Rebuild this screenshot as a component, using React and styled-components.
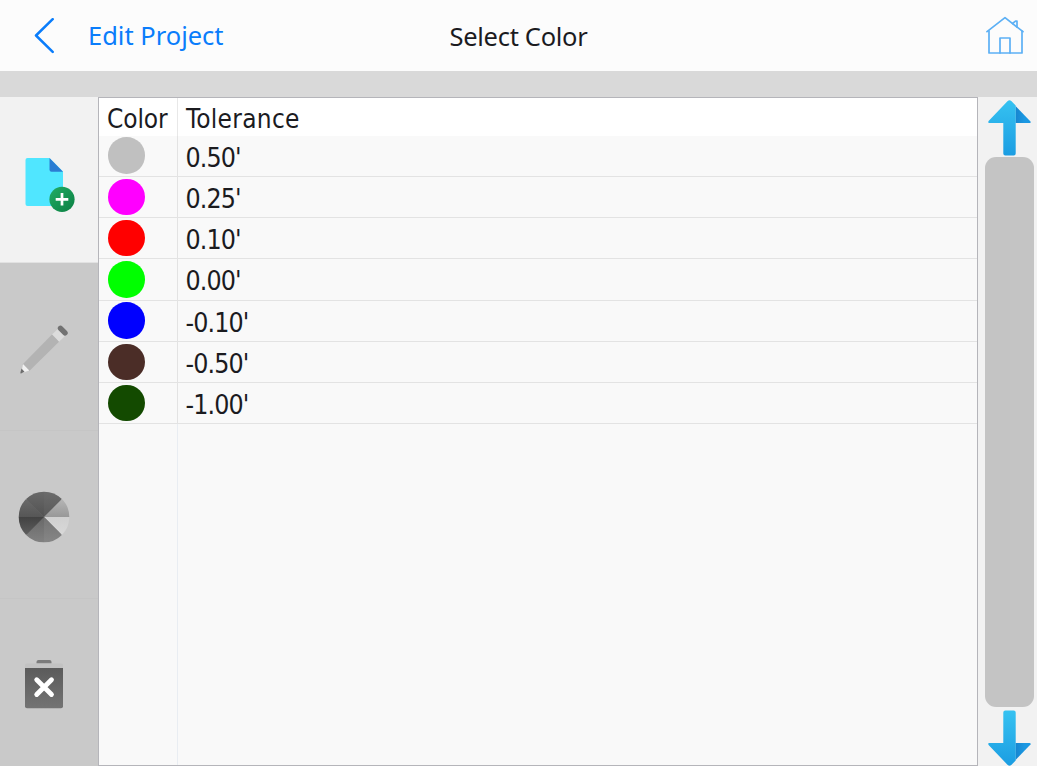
import React, { useState } from 'react';
import styled, { createGlobalStyle } from 'styled-components';

const GlobalStyle = createGlobalStyle`
  * {
    box-sizing: border-box;
  }

  body {
    margin: 0;
    overflow: hidden;
    font-family: 'Noto Sans', 'Open Sans', sans-serif;
    color: #1b1b1f;
  }

  svg {
    display: block;
  }
`;

const Screen = styled.div`
  display: flex;
  flex-direction: column;
  width: 100%;
  height: 100vh;
  background-color: #f2f2f2;
`;

const Header = styled.header`
  display: grid;
  grid-template-columns: 1fr auto 1fr;
  align-items: center;
  height: 71px;
  padding: 0 12px 0 33px;
  background-color: #fcfcfc;
`;

const BackButton = styled.button`
  display: flex;
  align-items: center;
  gap: 32px;
  height: 71px;
  padding: 0;
  border: none;
  background: none;
  color: #0a7dfb;
  font-family: inherit;
  font-size: 25.5px;
  line-height: 71px;
  letter-spacing: 0;
  cursor: pointer;
`;

const Title = styled.h1`
  margin: 0 21px 0 0;
  padding: 1px 0 0;
  font-size: 25.5px;
  font-weight: 400;
  line-height: 67px;
  letter-spacing: -0.3px;
  white-space: nowrap;
`;

const HomeButton = styled.button`
  justify-self: end;
  padding: 0;
  border: none;
  background: none;
  cursor: pointer;
`;

const Divider = styled.div`
  height: 26px;
  flex-shrink: 0;
  background-color: #d9d9d9;
`;

const Body = styled.main`
  display: flex;
  flex: 1;
  min-height: 0;
`;

const Sidebar = styled.nav`
  display: flex;
  flex-direction: column;
  width: 98px;
`;

const SideButton = styled.button`
  display: flex;
  flex-shrink: 0;
  align-items: center;
  justify-content: center;
  height: 168px;
  padding: ${props => props.$pad || '0 10px 0 0'};
  border: none;
  border-bottom: 1px solid ${props => (props.$active ? '#e2e2e2' : '#c5c5c5')};
  background-color: ${props => (props.$active ? '#f2f2f2' : '#c9c9c9')};
  cursor: pointer;

  &:first-child {
    height: 166px;
  }

  &:last-child {
    border-bottom: none;
  }
`;

const Table = styled.section`
  display: flex;
  flex-direction: column;
  flex: 1;
  border: 1px solid #b5b5ba;
  background-color: #f9f9f9;
`;

const TableHead = styled.div`
  display: grid;
  grid-template-columns: 79px 1fr;
  height: 37.5px;
  background-color: #ffffff;
`;

const HeadCell = styled.div`
  padding-left: 8px;
  border-right: ${props => (props.$first ? '1px solid #e8e8e8' : 'none')};
  font-family: 'DejaVu Sans Condensed', 'DejaVu Sans', sans-serif;
  font-stretch: condensed;
  font-size: 26px;
  line-height: 43px;
  letter-spacing: ${props => (props.$first ? -0.1 : 0.3)}px;
`;

const Row = styled.div`
  display: grid;
  grid-template-columns: 79px 1fr;
  height: 41.25px;
  border-bottom: 1px solid #e3e3e3;
`;

const SwatchCell = styled.div`
  display: flex;
  align-items: center;
  padding-left: 9px;
  border-right: 1px solid #e3e3e3;
`;

const Swatch = styled.span`
  width: 36.5px;
  height: 36.5px;
  border-radius: 50%;
  background-color: ${props => props.$color};
`;

const ValueCell = styled.div`
  height: 40px;
  padding-left: 7.5px;
  font-family: 'DejaVu Sans Condensed', 'DejaVu Sans', sans-serif;
  font-stretch: condensed;
  font-size: 26.5px;
  line-height: 43.5px;
  letter-spacing: -0.9px;
`;

const EmptyArea = styled.div`
  flex: 1;
  width: 79px;
  border-right: 1px solid #e9edf2;
`;

const ScrollColumn = styled.aside`
  display: flex;
  flex-direction: column;
  align-items: center;
  width: 59px;
  padding: 3px 0 0 3px;
`;

const ScrollThumb = styled.div`
  width: 49px;
  height: 551px;
  margin: 0.5px 0 3px;
  border-radius: 11px;
  background-color: #c4c4c4;
`;

const ArrowIcon = styled.svg`
  flex-shrink: 0;
  margin-left: 1px;
  transform: ${props => (props.$down ? 'scaleY(-1)' : 'none')};
`;

const tolerances = [
  { color: '#c0c0c0', value: "0.50'" },
  { color: '#ff00ff', value: "0.25'" },
  { color: '#ff0000', value: "0.10'" },
  { color: '#00ff00', value: "0.00'" },
  { color: '#0000ff', value: "-0.10'" },
  { color: '#4b2d27', value: "-0.50'" },
  { color: '#134a00', value: "-1.00'" }
];

const BackIcon = () => (
  <svg width="23" height="36" viewBox="0 0 23 36" fill="none" stroke="#0a7dfb" strokeWidth="2.5" strokeLinecap="round" strokeLinejoin="round">
    <path d="M19.700 1.200 3 17.500l16.700 16.400" />
  </svg>
);

const HomeIcon = () => (
  <svg width="40" height="40" viewBox="0 0 40 40" fill="none" stroke="#5cb0f5" strokeWidth="1.7" strokeLinejoin="round" strokeLinecap="round">
    <path d="M2 15.700 20 1.700l18 14" />
    <path d="M4 15v22h33V15" />
    <path d="M15 37V22h10v15" />
    <path d="M27.500 7.500 30.500 5.200h1.500v5.800" />
  </svg>
);

const AddFileIcon = () => (
  <svg width="50" height="56" viewBox="0 0 50 56">
    <defs>
      <linearGradient id="badge" x1="0" y1="0" x2="1" y2="1">
        <stop offset="0" stopColor="#21ad64" />
        <stop offset="1" stopColor="#0c7f43" />
      </linearGradient>
    </defs>
    <path d="M2.500 1H24.500L38 14.500V49H2.500A2 2 0 0 1 .5 47V3A2 2 0 0 1 2.500 1Z" fill="#50e6ff" />
    <path d="M24.500 1 38 14.700H26.500A2 2 0 0 1 24.500 12.700Z" fill="#2b7cd3" />
    <circle cx="37" cy="42.300" r="12.600" fill="url(#badge)" />
    <path d="M37 36v12.600M30.700 42.300h12.600" stroke="#fff" strokeWidth="2.700" />
  </svg>
);

const PencilIcon = () => (
  <svg width="50" height="50" viewBox="0 0 50 50">
    <path d="M33 9.500 38.800 4 46 11 40 16.800Z" fill="#dcdcdc" />
    <path d="M3.500 39.500 33 9.500 40 16.800 10.300 46Z" fill="#b3b3b3" />
    <path d="M4 39 10.300 45.500 2.500 48Z" fill="#f1f1f1" />
    <path d="M2.500 43.500 5.500 46.800 2 48.500Q1 48.500 1.500 47Z" fill="#6e6e6e" />
    <path d="M41.500 3.300 46 7.900" stroke="#727272" strokeWidth="5.400" strokeLinecap="round" />
  </svg>
);

const wheelSlices = [
  { path: 'M26 26V.7A25.300 25.300 0 0 1 43.900 8.100Z', from: '#6b6b6b', to: '#595959' },
  { path: 'M26 26 43.900 8.100A25.300 25.300 0 0 1 51.300 26Z', from: '#b5b5b5', to: '#989898' },
  { path: 'M26 26H51.300A25.300 25.300 0 0 1 43.900 43.900Z', from: '#d0d0d0', to: '#d9d9d9' },
  { path: 'M26 26 43.900 43.900A25.300 25.300 0 0 1 26 51.300Z', from: '#737373', to: '#868686' },
  { path: 'M26 26V51.300A25.300 25.300 0 0 1 8.100 43.900Z', from: '#686868', to: '#818181' },
  { path: 'M26 26 8.100 43.900A25.300 25.300 0 0 1 .7 26Z', from: '#424242', to: '#5d5d5d' },
  { path: 'M26 26H.7A25.300 25.300 0 0 1 8.100 8.100Z', from: '#6a6a6a', to: '#565656' },
  { path: 'M26 26 8.100 8.100A25.300 25.300 0 0 1 26 .7Z', from: '#696969', to: '#525252' }
];

const ColorWheelIcon = () => (
  <svg width="52" height="52" viewBox="0 0 52 52">
    <defs>
      {wheelSlices.map((slice, i) => (
        <linearGradient key={i} id={`slice-${i}`} x1="0" y1="0" x2="0" y2="1">
          <stop offset="0" stopColor={slice.from} />
          <stop offset="1" stopColor={slice.to} />
        </linearGradient>
      ))}
    </defs>
    <circle cx="26" cy="26" r="24.500" fill="#6e6e6e" />
    {wheelSlices.map((slice, i) => (
      <path key={i} d={slice.path} fill={`url(#slice-${i})`} />
    ))}
  </svg>
);

const TrashIcon = () => (
  <svg width="40" height="50" viewBox="0 0 40 50">
    <defs>
      <linearGradient id="bin" x1="0" y1="0" x2="0" y2="1">
        <stop offset="0" stopColor="#5b5b5b" />
        <stop offset="1" stopColor="#737373" />
      </linearGradient>
    </defs>
    <path d="M12.500 3.500V2a2 2 0 0 1 2-2h11a2 2 0 0 1 2 2V3.500Z" fill="#7b7b7b" />
    <path d="M1 9V5A1.500 1.500 0 0 1 2.500 3.500h35A1.500 1.500 0 0 1 39 5V9Z" fill="#c2c2c2" />
    <path d="M1 8H39V46.200A2 2 0 0 1 37 48.200H3A2 2 0 0 1 1 46.200Z" fill="url(#bin)" />
    <path d="M12.700 19.700 27.500 34.500M27.500 19.700 12.700 34.500" stroke="#fff" strokeWidth="4.800" strokeLinecap="round" />
  </svg>
);

const ScrollArrow = ({ down }) => {
  const id = down ? 'arrow-down' : 'arrow-up';

  return (
    <ArrowIcon $down={down} width="43" height="56" viewBox="0 0 43 56">
      <defs>
        <linearGradient id={id} x1="0" y1={down ? 1 : 0} x2="0" y2={down ? 0 : 1}>
          <stop offset="0" stopColor="#36c2f1" />
          <stop offset="1" stopColor="#1b9de2" />
        </linearGradient>
        <linearGradient id={`${id}-fold`} x1="0" y1="0" x2="1" y2="0">
          <stop offset="0" stopColor="#1785cf" />
          <stop offset="0.6" stopColor="#1b98e2" />
        </linearGradient>
      </defs>
      <path d="M27.500 6 42.500 21.500Q43 23 41.500 23H27.500Z" fill={`url(#${id}-fold)`} />
      <path d="M19.700 1Q21.500 -.5 23.300 1L27.700 5.500V53.500Q27.700 55.500 25.700 55.500H17.300Q15.300 55.500 15.300 53.500V23H1.200Q-.4 23 .6 21Z" fill={`url(#${id})`} />
    </ArrowIcon>
  );
};

const App = () => {
  const [rows] = useState(tolerances);

  return (
    <Screen>
      <GlobalStyle />
      <Header>
        <BackButton type="button">
          <BackIcon />
          Edit Project
        </BackButton>
        <Title>Select Color</Title>
        <HomeButton type="button" aria-label="Home">
          <HomeIcon />
        </HomeButton>
      </Header>
      <Divider />

      <Body>
        <Sidebar>
          <SideButton type="button" $active $pad="10.500px 0 0 2px" aria-label="Add color">
            <AddFileIcon />
          </SideButton>
          <SideButton type="button" $pad="7px 10px 0 0" aria-label="Edit color">
            <PencilIcon />
          </SideButton>
          <SideButton type="button" $pad="5px 10px 0 0" aria-label="Choose from palette">
            <ColorWheelIcon />
          </SideButton>
          <SideButton type="button" $pad="3px 10px 0 0" aria-label="Delete color">
            <TrashIcon />
          </SideButton>
        </Sidebar>

        <Table>
          <TableHead>
            <HeadCell $first>Color</HeadCell>
            <HeadCell>Tolerance</HeadCell>
          </TableHead>
          {rows.map(row => (
            <Row key={row.value}>
              <SwatchCell>
                <Swatch $color={row.color} />
              </SwatchCell>
              <ValueCell>{row.value}</ValueCell>
            </Row>
          ))}
          <EmptyArea />
        </Table>

        <ScrollColumn>
          <ScrollArrow />
          <ScrollThumb />
          <ScrollArrow down />
        </ScrollColumn>
      </Body>
    </Screen>
  );
};

export default App;
